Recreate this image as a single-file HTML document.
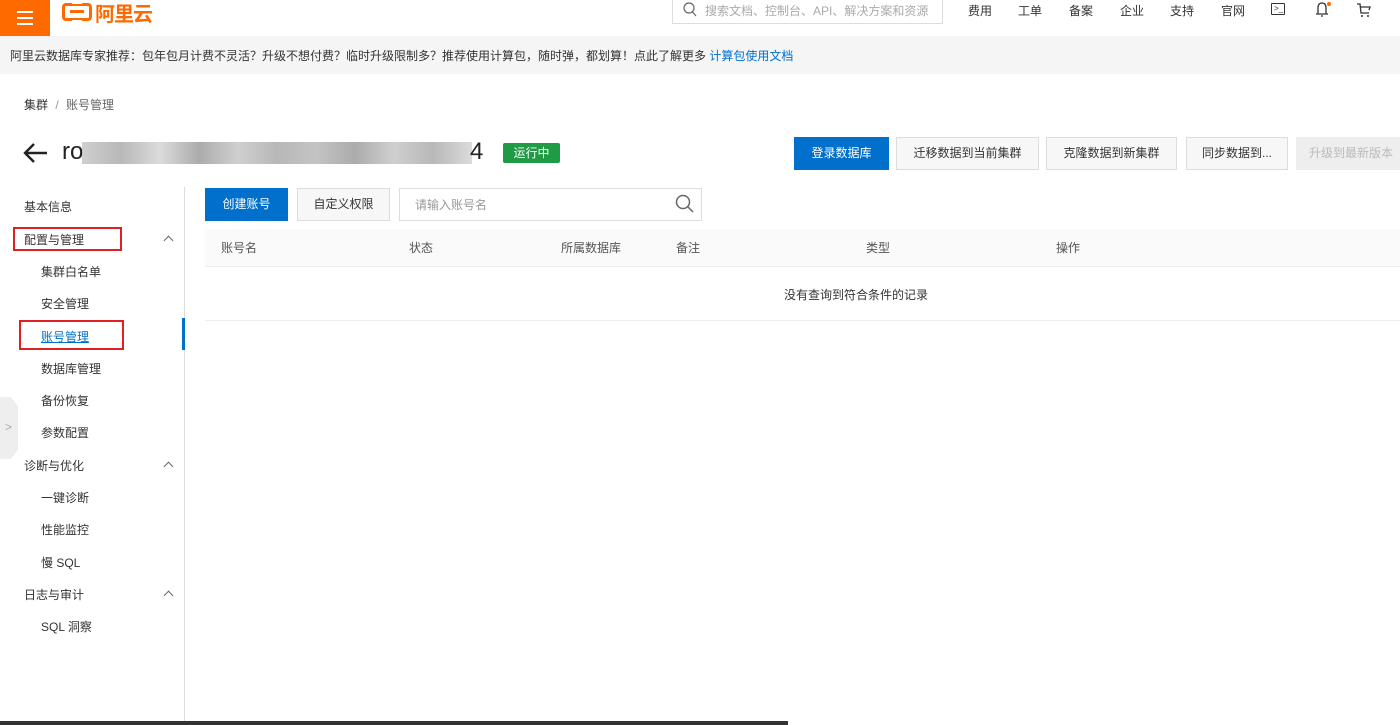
<!DOCTYPE html>
<html><head><meta charset="utf-8"><style>
*{margin:0;padding:0;box-sizing:border-box}
body{width:1400px;height:725px;overflow:hidden;background:#fff;font-family:"Liberation Sans","Noto Sans CJK SC",sans-serif;font-size:12px;color:#333;position:relative}
.a{position:absolute;white-space:nowrap}
.top{position:absolute;left:0;top:0;width:1400px;height:36px;background:#fff;box-shadow:0 1px 4px rgba(0,0,0,.08)}
.btn{position:absolute;height:33px;line-height:31px;text-align:center;border:1px solid #ddd;background:#f7f7f7;font-size:12px;color:#333}
.side{font-size:12px;color:#333}
.chev{position:absolute;width:7px;height:7px;border-left:1px solid #666;border-top:1px solid #666;transform:rotate(45deg)}
</style></head><body>
<div class="top">
  <div class="a" style="left:0;top:0;width:50px;height:36px;background:#ff6a00"></div>
  <div class="a" style="left:17px;top:11px;width:16px;height:2px;background:#fff;box-shadow:0 6px 0 #fff,0 12px 0 #fff"></div>
  <div class="a" style="left:62px;top:3px;width:30px;height:18px;border:3px solid #ff6a00;border-radius:4px"></div>
  <div class="a" style="left:70px;top:10px;width:14px;height:3px;background:#ff6a00"></div>
  <div class="a" style="left:72px;top:0px;width:10px;height:4px;background:#fff"></div>
  <div class="a" style="left:72px;top:20px;width:10px;height:4px;background:#fff"></div>
  <div class="a" style="left:95px;top:-2px;font-size:20px;font-weight:bold;color:#ff6a00;letter-spacing:-1px">阿里云</div>
  <div class="a" style="left:672px;top:-4px;width:271px;height:28px;border:1px solid #ddd"></div>
  <svg class="a" style="left:683px;top:2px" width="14" height="16"><circle cx="6" cy="6" r="5" fill="none" stroke="#666" stroke-width="1.2"/><path d="M9.5 10 L13 14" stroke="#666" stroke-width="1.2"/></svg>
  <div class="a" style="left:705px;top:2px;color:#aaa">搜索文档、控制台、API、解决方案和资源</div>
  <div class="a" style="left:968px;top:2px">费用</div>
  <div class="a" style="left:1018px;top:2px">工单</div>
  <div class="a" style="left:1069px;top:2px">备案</div>
  <div class="a" style="left:1120px;top:2px">企业</div>
  <div class="a" style="left:1170px;top:2px">支持</div>
  <div class="a" style="left:1221px;top:2px">官网</div>
  <div class="a" style="left:1271px;top:3px;width:14px;height:12px;border:1.3px solid #333;border-radius:1px;font-size:8px;line-height:9px;padding-left:2px">&gt;_</div>
  <svg class="a" style="left:1314px;top:1px" width="18" height="17"><path d="M4 13 L4 7 Q4 2 8 2 Q12 2 12 7 L12 13 M2 13 H14 M7 15 H9" fill="none" stroke="#333" stroke-width="1.3"/><circle cx="15" cy="3" r="2" fill="#ff6a00"/></svg>
  <svg class="a" style="left:1356px;top:2px" width="16" height="16"><path d="M1 2 H4 L5 11 H13 M4 5 H14 L13 8" fill="none" stroke="#333" stroke-width="1.3"/><circle cx="6" cy="14" r="1" fill="#333"/><circle cx="12" cy="14" r="1" fill="#333"/></svg>
</div>
<div class="a" style="left:0;top:36px;width:1400px;height:38px;background:#f5f5f5"></div>
<div class="a" style="left:10px;top:47px">阿里云数据库专家推荐：包年包月计费不灵活？升级不想付费？临时升级限制多？推荐使用计算包，随时弹，都划算！点此了解更多 <span style="color:#0070cc">计算包使用文档</span></div>
<div class="a" style="left:24px;top:96px;color:#333">集群 <span style="color:#999;padding:0 4px">/</span> <span style="color:#666">账号管理</span></div>
<svg class="a" style="left:22px;top:142px" width="28" height="22"><path d="M3 11 H25 M12 2 L3 11 L12 20" fill="none" stroke="#222" stroke-width="2.4"/></svg>
<div class="a" style="left:62px;top:138px;font-size:24px;color:#222">ro</div>
<div class="a" style="left:82px;top:142px;width:390px;height:22px;background:linear-gradient(90deg,#bbb,#999 10%,#ccc 20%,#888 30%,#bbb 40%,#999 50%,#aaa 60%,#888 70%,#bbb 80%,#999 90%,#ccc);opacity:.7"></div>
<div class="a" style="left:470px;top:138px;font-size:24px;color:#222">4</div>
<div class="a" style="left:503px;top:143px;width:57px;height:20px;background:#1f9a45;border-radius:2px;color:#fff;font-size:12px;text-align:center;line-height:20px">运行中</div>
<div class="btn" style="left:794px;top:137px;width:95px;background:#0070cc;border-color:#0070cc;color:#fff">登录数据库</div>
<div class="btn" style="left:896px;top:137px;width:143px">迁移数据到当前集群</div>
<div class="btn" style="left:1046px;top:137px;width:131px">克隆数据到新集群</div>
<div class="btn" style="left:1186px;top:137px;width:102px">同步数据到...</div>
<div class="btn" style="left:1296px;top:137px;width:110px;background:#eee;border-color:#eee;color:#bbb">升级到最新版本</div>
<!-- sidebar -->
<div class="a" style="left:184px;top:187px;width:1px;height:538px;background:#ddd"></div>
<div class="a" style="left:182px;top:318px;width:3px;height:32px;background:#0070cc"></div>
<div class="a side" style="left:24px;top:198px">基本信息</div>
<div class="a side" style="left:24px;top:231px">配置与管理</div>
<div class="a" style="left:13px;top:227px;width:109px;height:24px;border:2px solid #e02020"></div>
<div class="chev" style="left:165px;top:237px"></div>
<div class="a side" style="left:41px;top:263px">集群白名单</div>
<div class="a side" style="left:41px;top:295px">安全管理</div>
<div class="a side" style="left:41px;top:328px;color:#0070cc;text-decoration:underline">账号管理</div>
<div class="a" style="left:19px;top:320px;width:105px;height:30px;border:2px solid #e02020"></div>
<div class="a side" style="left:41px;top:360px">数据库管理</div>
<div class="a side" style="left:41px;top:392px">备份恢复</div>
<div class="a" style="left:0;top:397px;width:18px;height:62px;background:#eee;clip-path:polygon(0 0,60% 0,100% 15%,100% 85%,60% 100%,0 100%)"></div>
<div class="a" style="left:5px;top:420px;color:#aaa">&gt;</div>
<div class="a side" style="left:41px;top:424px">参数配置</div>
<div class="a side" style="left:24px;top:457px">诊断与优化</div>
<div class="chev" style="left:165px;top:463px"></div>
<div class="a side" style="left:41px;top:489px">一键诊断</div>
<div class="a side" style="left:41px;top:521px">性能监控</div>
<div class="a side" style="left:41px;top:554px">慢 SQL</div>
<div class="a side" style="left:24px;top:586px">日志与审计</div>
<div class="chev" style="left:165px;top:592px"></div>
<div class="a side" style="left:41px;top:618px">SQL 洞察</div>
<!-- content -->
<div class="btn" style="left:205px;top:188px;width:83px;background:#0070cc;border-color:#0070cc;color:#fff">创建账号</div>
<div class="btn" style="left:297px;top:188px;width:93px">自定义权限</div>
<div class="a" style="left:399px;top:188px;width:303px;height:33px;border:1px solid #ddd"></div>
<div class="a" style="left:415px;top:196px;color:#999">请输入账号名</div>
<svg class="a" style="left:675px;top:194px" width="20" height="20"><circle cx="8" cy="8" r="6.5" fill="none" stroke="#666" stroke-width="1.5"/><path d="M13 13 L18 18" stroke="#666" stroke-width="1.5"/></svg>
<div class="a" style="left:205px;top:229px;width:1195px;height:38px;background:#fafafa;border-bottom:1px solid #eee"></div>
<div class="a" style="left:221px;top:239px;color:#555">账号名</div>
<div class="a" style="left:409px;top:239px;color:#555">状态</div>
<div class="a" style="left:561px;top:239px;color:#555">所属数据库</div>
<div class="a" style="left:676px;top:239px;color:#555">备注</div>
<div class="a" style="left:866px;top:239px;color:#555">类型</div>
<div class="a" style="left:1056px;top:239px;color:#555">操作</div>
<div class="a" style="left:784px;top:286px;color:#333">没有查询到符合条件的记录</div>
<div class="a" style="left:205px;top:320px;width:1195px;height:1px;background:#eee"></div>
<div class="a" style="left:0;top:721px;width:788px;height:4px;background:#333"></div>
</body></html>
